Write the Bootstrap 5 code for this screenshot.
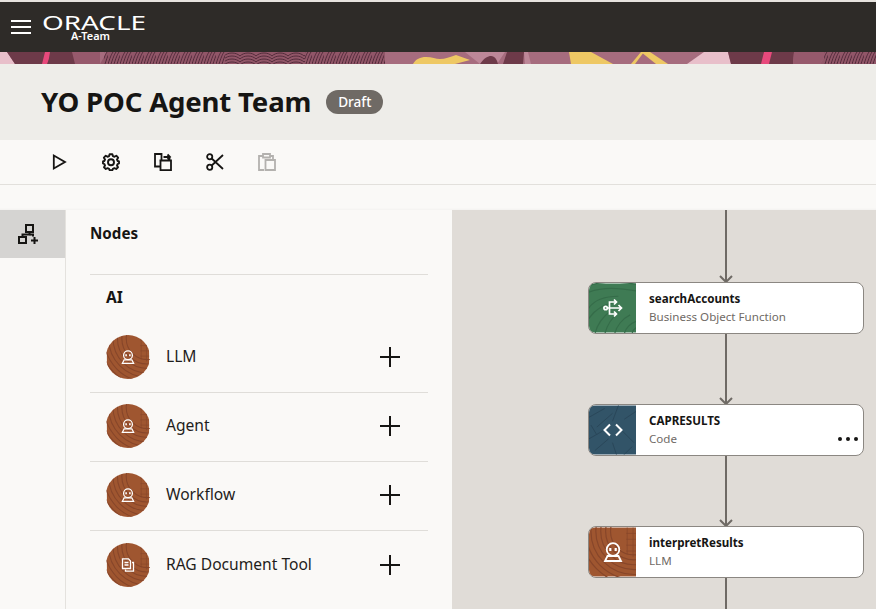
<!DOCTYPE html>
<html lang="en">
<head>
    <meta charset="UTF-8">
    <meta name="viewport" content="width=device-width, initial-scale=1.0">
    <title>YO POC Agent Team</title>
    <link href="https://cdn.jsdelivr.net/npm/bootstrap@5.3.3/dist/css/bootstrap.min.css" rel="stylesheet">
    <style>
        html, body {
            height: 100%;
        }
        body {
            font-family: "Noto Sans", "Liberation Sans", sans-serif;
            color: #161513;
            background-color: #faf9f7;
            overflow: hidden;
        }
        .app-shell {
            height: 609px;
        }
        .top-edge {
            height: 2px;
            background-color: #e6e3de;
        }
        .app-bar {
            height: 50px;
            background-color: #2e2b28;
            padding: 0 0 0 11px;
            flex-wrap: nowrap;
        }
        .burger {
            width: 20px;
            height: 14px;
            border-top: 2px solid #fff;
            border-bottom: 2px solid #fff;
            position: relative;
        }
        .burger::after {
            content: "";
            position: absolute;
            left: 0;
            right: 0;
            top: 4px;
            height: 2px;
            background-color: #fff;
        }
        .logo-box {
            margin-left: 11px;
            width: 106px;
            height: 36px;
            display: block;
        }
        .banner {
            display: block;
            width: 876px;
            height: 12px;
        }
        .title-band {
            height: 76px;
            background-color: #eeede9;
            padding-left: 41px;
        }
        .title-band h1 {
            font-size: 27.6px;
            font-weight: 700;
            letter-spacing: -0.2px;
            margin: 0 15px 0 0;
        }
        .draft-pill {
            background-color: #6f6a65;
            font-size: 13.6px;
            font-weight: 500;
            padding: 0 12px;
            line-height: 24px;
            height: 24px;
        }
        .tool-strip {
            height: 45px;
            padding-left: 33px;
            background-color: #faf9f7;
            border-bottom: 1px solid #e2e0dc;
        }
        .tool-btn {
            width: 52px;
            height: 44px;
            padding: 0;
            border: 0;
            color: #161513;
            display: flex;
            align-items: center;
            justify-content: center;
        }
        .tool-btn:disabled {
            color: #b3b1ae;
            opacity: 1;
        }
        .sub-strip {
            height: 25px;
            box-shadow: inset 0 -3px 3px -3px rgba(0, 0, 0, .06);
        }
        .work-area {
            height: 399px;
        }
        .rail {
            width: 66px;
            border-right: 1px solid #e4e2de;
            flex: none;
        }
        .rail-tab {
            height: 48px;
            background-color: #d5d4d2;
            padding: 14px 0 0 18px;
        }
        .rail-tab svg {
            display: block;
        }
        .nodes-panel {
            width: 386px;
            flex: none;
            padding: 0 24px;
            background-color: #faf9f7;
        }
        .panel-head {
            height: 65px;
            padding-top: 12px;
            font-size: 15.2px;
            font-weight: 700;
            border-bottom: 1px solid #dfddd9;
        }
        .group-head {
            height: 49px;
            padding: 11px 0 0 16px;
            font-size: 15.6px;
            font-weight: 700;
        }
        .node-row {
            height: 69px;
            background-color: transparent;
            padding: 0 28px 2px 16px;
            font-size: 15.6px;
            color: #1f1d1b;
            border-color: #dfddd9;
        }
        .node-row:last-child {
            border-bottom: 1px solid #dfddd9;
        }
        .node-disc {
            width: 44px;
            height: 44px;
            border-radius: 50%;
            overflow: hidden;
            flex: none;
            position: relative;
            margin-right: 16px;
        }
        .node-disc svg, .step-thumb svg {
            display: block;
        }
        .disc-icon {
            position: absolute;
            left: 15px;
            top: 15px;
        }
        .plus-mark {
            width: 20px;
            height: 20px;
            position: relative;
        }
        .plus-mark::before, .plus-mark::after {
            content: "";
            position: absolute;
            background-color: #161513;
        }
        .plus-mark::before {
            left: 9px;
            top: 0;
            width: 2px;
            height: 20px;
        }
        .plus-mark::after {
            left: 0;
            top: 9px;
            width: 20px;
            height: 2px;
        }
        .flow-canvas {
            background-color: #e0dcd7;
            position: relative;
        }
        .flow-lines {
            position: absolute;
            left: 0;
            top: 0;
        }
        .step-card {
            position: absolute;
            left: 136px;
            width: 276px;
            height: 52px;
            background-color: #fff;
            border: 1px solid #8b8782;
            border-radius: 8px;
            overflow: hidden;
        }
        .step-a { top: 72px; }
        .step-b { top: 194px; }
        .step-c { top: 316px; }
        .step-thumb {
            width: 47px;
            flex: none;
            position: relative;
            height: 50px;
        }
        .thumb-icon {
            position: absolute;
            left: 14px;
            top: 15px;
        }
        .step-text {
            padding-left: 13px;
            line-height: 18px;
        }
        .step-name {
            font-size: 11.6px;
            font-weight: 700;
        }
        .step-kind {
            font-size: 11.6px;
            color: #6f6a65;
        }
        .step-more {
            position: absolute;
            right: 5px;
            bottom: 14px;
            display: flex;
            gap: 4px;
        }
        .step-more i {
            width: 4px;
            height: 4px;
            border-radius: 50%;
            background-color: #161513;
        }
    </style>
</head>
<body>

    <!-- shared wood textures and icons -->
    <svg width="0" height="0" class="position-absolute">
        <defs>
            <pattern id="printA" width="12" height="12" patternUnits="userSpaceOnUse">
                <path d="M0 12C2 6 3 3 5 0M3 12C5 6 6 3 8 0M6 12C8 6 9 3 11 0M9 12C11 6 12 3 14 0" fill="none" stroke="#43202e" stroke-width=".8"/>
            </pattern>
            <pattern id="printB" width="16" height="12" patternUnits="userSpaceOnUse">
                <path d="M0 4C4 0 12 0 16 4M0 7C4 3 12 3 16 7M0 10C4 6 12 6 16 10M0 13C4 9 12 9 16 13" fill="none" stroke="#43202e" stroke-width=".8"/>
            </pattern>
            <symbol id="woodBrown" viewBox="0 0 48 50">
                <rect width="48" height="50" fill="#9f5630"/>
                <g fill="none" stroke="#87462a" stroke-width="1.200">
                    <circle cx="46" cy="4" r="24"/>
                    <circle cx="46" cy="4" r="29"/>
                    <circle cx="46" cy="4" r="34"/>
                    <circle cx="46" cy="4" r="39"/>
                    <circle cx="46" cy="4" r="44"/>
                    <circle cx="46" cy="4" r="49"/>
                    <circle cx="46" cy="4" r="54"/>
                    <path d="M39 0V28M45 0V30M38 6H48M38 12H48M38 18H48M38 24H48" stroke-width=".7"/>
                </g>
            </symbol>
            <symbol id="woodGreen" viewBox="0 0 48 50">
                <rect width="48" height="50" fill="#3f7b54"/>
                <g fill="none" stroke="#356c49" stroke-width="1.200">
                    <path d="M-3 10C10 4 26 3 50 8M-3 3C10 -2 26 -3 50 1"/>
                    <path d="M-3 30C2 18 14 13 30 13M-3 40C4 28 12 22 24 20M6 52C8 42 14 34 22 28M16 52C18 44 22 36 30 30M26 52C28 44 34 36 42 32M36 52C37 46 42 40 50 38M44 52C44 48 46 46 50 44"/>
                </g>
            </symbol>
            <symbol id="woodBlue" viewBox="0 0 48 50">
                <rect width="48" height="50" fill="#325468"/>
                <g fill="none" stroke="#2a4759" stroke-width="1">
                    <path d="M0 12L16 3M8 22L24 8M30 0L24 16M36 14L48 6M0 34L14 26M34 26L46 38M6 46L20 34M28 50L24 38M36 50L44 42M2 20L8 30"/>
                </g>
            </symbol>
            <symbol id="robot" viewBox="0 0 20 20">
                <circle cx="10" cy="7.500" r="6.300" fill="none" stroke="#fff" stroke-width="1.800"/>
                <path d="M7.300 6V9M12.700 6V9" stroke="#fff" stroke-width="2.200"/>
                <path d="M4.500 14H15.500L18 19H2Z" fill="none" stroke="#fff" stroke-width="1.800"/>
            </symbol>
        </defs>
    </svg>

    <div class="app-shell d-flex flex-column">
        <div class="top-edge"></div>

        <nav class="navbar app-bar">
            <div class="d-flex align-items-center">
                <span class="burger d-block"></span>
                <svg class="logo-box" viewBox="0 0 106 36">
                    <text x="0" y="20.500" textLength="104" lengthAdjust="spacingAndGlyphs" font-family="Noto Sans" font-size="19" fill="#fff">ORACLE</text>
                    <text x="29" y="30.500" textLength="39" lengthAdjust="spacingAndGlyphs" font-family="Noto Sans" font-size="10" font-weight="600" fill="#fff">A-Team</text>
                </svg>
            </div>
        </nav>

        <svg class="banner" viewBox="0 0 876 12" preserveAspectRatio="none">
            <rect width="876" height="12" fill="#a66c7e"/>
            <rect width="100" height="12" fill="#96596c"/>
            <path d="M0 0H7L15 12H0Z" fill="#e8bfca"/>
            <path d="M7 0H52L50 12H15Z" fill="#6d3a49"/>
            <path d="M45 0H52L47 12H42Z" fill="#e8497c"/>
            <path d="M50 0H72L75 12H48Z" fill="#6d3a49"/>
            <path d="M100 12L107 0H385V12Z" fill="#915668"/>
            <rect x="104" width="121" height="12" fill="url(#printA)"/>
            <rect x="225" width="80" height="12" fill="url(#printB)"/>
            <rect x="305" width="80" height="12" fill="url(#printA)"/>
            <path d="M413 12C416 7 420 5 426 5C432 5 436 7 440 7C445 7 450 5 456 3L470 8L455 12Z" fill="#eec864"/>
            <path d="M465 0H505L497 12H480Z" fill="#bd8798"/>
            <path d="M480 12C484 6 488 4 491 4C495 4 497 8 498 12Z" fill="#6d3a49"/>
            <path d="M507 0H524L523 12H503Z" fill="#6d3a49"/>
            <path d="M524 0H528L531 12H525Z" fill="#bd8798"/>
            <path d="M569 0H591L613 12H571Z" fill="#eec864"/>
            <path d="M641 0H650L668 12H656Z" fill="#eec864"/>
            <path d="M641 0H644L635 12H631Z" fill="#eec864"/>
            <path d="M704 0H728L731 12H687Z" fill="#e8bfca"/>
            <path d="M728 0H794L793 12H731Z" fill="#6d3a49"/>
            <path d="M764 0H772L769 12H761Z" fill="#e8497c"/>
            <path d="M794 0H828L820 12H793Z" fill="#96596c"/>
            <path d="M820 12L828 0H876V12Z" fill="#915668"/>
            <rect x="824" width="52" height="12" fill="url(#printA)"/>
        </svg>

        <div class="title-band d-flex align-items-center">
            <h1>YO POC Agent Team</h1>
            <span class="badge rounded-pill draft-pill">Draft</span>
        </div>

        <div class="tool-strip d-flex align-items-start">
            <button type="button" class="btn tool-btn" aria-label="Run">
                <svg width="18" height="18" viewBox="0 0 18 18" fill="none" stroke="currentColor" stroke-width="1.800"><path d="M3.800 2.500V15.500L15 9Z"/></svg>
            </button>
            <button type="button" class="btn tool-btn" aria-label="Settings">
                <svg width="18" height="18" viewBox="0 0 18 18" fill="none" stroke="currentColor" stroke-width="1.900"><path d="M7.600 1.200H10.400L10.900 3.100L12.500 3.800L14.300 2.700L16.100 4.700L15 6.500L15.700 8L17 8.500V10.400L15.700 11L15 12.500L16 14.300L14.200 16L12.400 15.100L10.900 15.800L10.400 17.200H7.600L7.100 15.800L5.600 15.100L3.800 16L2 14.300L3 12.500L2.300 11L1 10.400V8.500L2.300 8L3 6.500L1.900 4.700L3.800 2.700L5.500 3.800L7.100 3.100Z" stroke-linejoin="round"/><circle cx="9" cy="9.200" r="3"/></svg>
            </button>
            <button type="button" class="btn tool-btn" aria-label="Duplicate">
                <svg width="18" height="18" viewBox="0 0 18 18" fill="none" stroke="currentColor" stroke-width="1.800"><path d="M6.500 13.500H1V1H7.500V7.500M5.500 7.500H17V17.200H6.500V7.500M9.500 4H15.500V6.500M13.500 1.500L16 4L13.500 6"/></svg>
            </button>
            <button type="button" class="btn tool-btn" aria-label="Cut">
                <svg width="18" height="18" viewBox="0 0 18 18" fill="none" stroke="currentColor" stroke-width="1.800"><circle cx="3.700" cy="3.700" r="2.600"/><circle cx="3.700" cy="14.300" r="2.600"/><path d="M5.700 5.500L17 16M5.700 12.500L17 2"/></svg>
            </button>
            <button type="button" class="btn tool-btn" disabled aria-label="Paste">
                <svg width="18" height="18" viewBox="0 0 18 18" fill="none" stroke="currentColor" stroke-width="1.800"><path d="M6 17H1V3H5M12 3H15V6M5 4.500V1H12V4.500H5ZM7.500 7H17V17H7.500Z"/></svg>
            </button>
        </div>

        <div class="sub-strip"></div>

        <div class="work-area d-flex">
            <div class="rail">
                <div class="rail-tab">
                    <svg width="20" height="20" viewBox="0 0 20 20" fill="none" stroke="#161513" stroke-width="2"><path d="M8 1H15V8H8ZM11.500 8V10.500H4.500V13M1 13H8V19H1Z"/><path d="M11.500 10.500H15V12.500M13 16.500H20M16.500 13V20"/></svg>
                </div>
            </div>

            <div class="nodes-panel">
                <div class="panel-head">Nodes</div>
                <div class="group-head">AI</div>
                <div class="list-group list-group-flush">
                    <div class="list-group-item node-row d-flex align-items-center">
                        <span class="node-disc"><svg width="44" height="44"><use href="#woodBrown"/></svg><svg class="disc-icon" width="14" height="14"><use href="#robot"/></svg></span>
                        <span class="flex-grow-1">LLM</span>
                        <span class="plus-mark"></span>
                    </div>
                    <div class="list-group-item node-row d-flex align-items-center">
                        <span class="node-disc"><svg width="44" height="44"><use href="#woodBrown"/></svg><svg class="disc-icon" width="14" height="14"><use href="#robot"/></svg></span>
                        <span class="flex-grow-1">Agent</span>
                        <span class="plus-mark"></span>
                    </div>
                    <div class="list-group-item node-row d-flex align-items-center">
                        <span class="node-disc"><svg width="44" height="44"><use href="#woodBrown"/></svg><svg class="disc-icon" width="14" height="14"><use href="#robot"/></svg></span>
                        <span class="flex-grow-1">Workflow</span>
                        <span class="plus-mark"></span>
                    </div>
                    <div class="list-group-item node-row d-flex align-items-center">
                        <span class="node-disc"><svg width="44" height="44"><use href="#woodBrown"/></svg><svg class="disc-icon" width="14" height="14" viewBox="0 0 14 14" fill="none" stroke="#fff" stroke-width="1.300"><path d="M1.500 .8H7.500L9.500 3V10.500H1.500ZM3.500 4.500H7.500M3.500 7H7.500"/><path d="M11 4.500H12.500V13.200H4.500V11.500"/></svg></span>
                        <span class="flex-grow-1">RAG Document Tool</span>
                        <span class="plus-mark"></span>
                    </div>
                </div>
            </div>

            <div class="flow-canvas flex-grow-1">
                <svg class="flow-lines" width="424" height="399" fill="none" stroke="#6f6a65" stroke-width="2">
                    <path d="M274 0V72M274 124V194M274 246V316M274 368V399"/>
                    <path d="M268 66L274 72L280 66M268 188L274 194L280 188M268 310L274 316L280 310"/>
                </svg>

                <div class="step-card step-a d-flex">
                    <div class="step-thumb"><svg width="47" height="50" preserveAspectRatio="none"><use href="#woodGreen"/></svg>
                        <svg class="thumb-icon" width="20" height="20" viewBox="0 0 20 20" fill="none" stroke="#fff" stroke-width="1.700"><circle cx="2.600" cy="10" r="1.700"/><path d="M4.500 10H18.500M15.500 7L18.500 10L15.500 13M6.500 10V4H13.500M11 1.500L13.500 4L11 6.500M6.500 10V16H13.500M11 13.500L13.500 16L11 18.500"/></svg>
                    </div>
                    <div class="step-text d-flex flex-column justify-content-center">
                        <div class="step-name">searchAccounts</div>
                        <div class="step-kind">Business Object Function</div>
                    </div>
                </div>

                <div class="step-card step-b d-flex">
                    <div class="step-thumb"><svg width="47" height="50" preserveAspectRatio="none"><use href="#woodBlue"/></svg>
                        <svg class="thumb-icon" width="20" height="20" viewBox="0 0 20 20" fill="none" stroke="#fff" stroke-width="2"><path d="M7 4.500L1.500 10L7 15.500M13 4.500L18.500 10L13 15.500"/></svg>
                    </div>
                    <div class="step-text d-flex flex-column justify-content-center">
                        <div class="step-name">CAPRESULTS</div>
                        <div class="step-kind">Code</div>
                    </div>
                    <div class="step-more"><i></i><i></i><i></i></div>
                </div>

                <div class="step-card step-c d-flex">
                    <div class="step-thumb"><svg width="47" height="50" preserveAspectRatio="none"><use href="#woodBrown"/></svg>
                        <svg class="thumb-icon" width="20" height="20"><use href="#robot"/></svg>
                    </div>
                    <div class="step-text d-flex flex-column justify-content-center">
                        <div class="step-name">interpretResults</div>
                        <div class="step-kind">LLM</div>
                    </div>
                </div>
            </div>
        </div>
    </div>

    <script src="https://cdn.jsdelivr.net/npm/bootstrap@5.3.3/dist/js/bootstrap.bundle.min.js"></script>
</body>
</html>
